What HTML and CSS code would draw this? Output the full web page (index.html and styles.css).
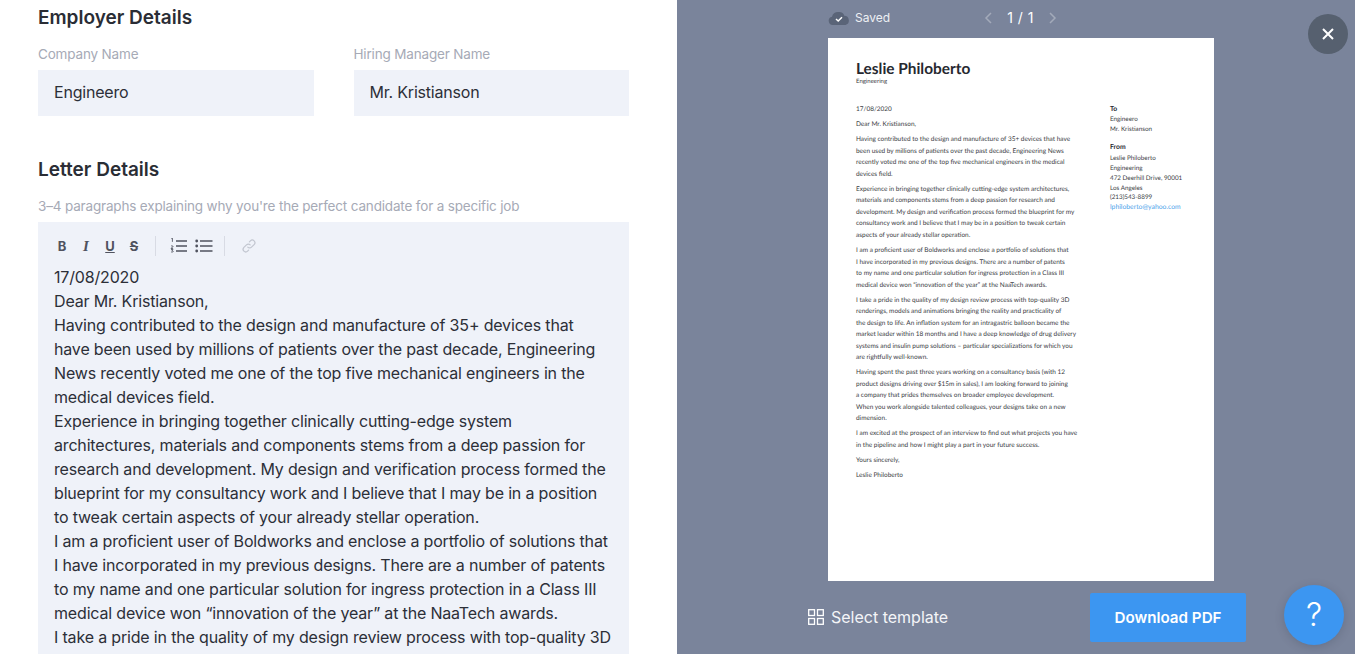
FILE: index.html
```html
<!DOCTYPE html>
<html lang="en">
<head>
<meta charset="utf-8">
<title>Cover letter editor</title>
<link rel="stylesheet" href="styles.css">
</head>
<body>
<main class="editor">
  <h2 class="section-title first">Employer Details</h2>
  <div class="field-row">
    <div class="field">
      <label class="field-label">Company Name</label>
      <div class="field-input">Engineero</div>
    </div>
    <div class="field">
      <label class="field-label">Hiring Manager Name</label>
      <div class="field-input">Mr. Kristianson</div>
    </div>
  </div>
  <h2 class="section-title second">Letter Details</h2>
  <p class="hint">3–4 paragraphs explaining why you're the perfect candidate for a specific job</p>
  <section class="rich">
    <div class="toolbar">
      <span class="tool tool-b">B</span>
      <span class="tool tool-i">I</span>
      <span class="tool tool-u">U</span>
      <span class="tool tool-s">S</span>
      <span class="tool-sep sep-a"></span>
      <svg class="tool-icon" width="18" height="16" viewBox="0 0 18 16"><g fill="none" stroke="#50535f" stroke-width="1.5"><path d="M6 3h11M6 8h11M6 13h11"/></g><g fill="none" stroke="#50535f" stroke-width=".9"><path d="M1.4 1.2l1-.6v4M1 9.300c.3-.8 2-.8 2 .2 0 .8-2 1.300-2 2h2.100M1 12.700h2l-1 1.200c1 0 1.300.4 1.200.9-.2.8-1.700.7-2.200.1" transform="translate(0 -.5) scale(1 .95)"/></g></svg>
      <svg class="tool-icon icon-bullets" width="18" height="16" viewBox="0 0 18 16"><g fill="none" stroke="#50535f" stroke-width="1.500"><path d="M5 3h12.500M5 8h12.500M5 13h12.500"/></g><g fill="#50535f"><circle cx="1.700" cy="3" r="1.400"/><circle cx="1.700" cy="8" r="1.400"/><circle cx="1.700" cy="13" r="1.400"/></g></svg>
      <span class="tool-sep sep-b"></span>
      <svg class="tool-icon icon-link" width="16" height="16" viewBox="0 0 16 16"><g fill="none" stroke="#c2c6d0" stroke-width="1.200" stroke-linecap="round"><path d="M6.800 9.200a2.600 2.600 0 0 0 3.700 0l2.600-2.600a2.600 2.600 0 0 0-3.700-3.700l-1 1"/><path d="M9.200 6.800a2.600 2.600 0 0 0-3.700 0l-2.600 2.600a2.600 2.600 0 0 0 3.700 3.700l1-1"/></g></svg>
    </div>
    <div class="rich-text">
      <p>17/08/2020</p>
      <p>Dear Mr. Kristianson,</p>
      <p>Having contributed to the design and manufacture of 35+ devices that<br>have been used by millions of patients over the past decade, Engineering<br>News recently voted me one of the top five mechanical engineers in the<br>medical devices field.</p>
      <p>Experience in bringing together clinically cutting-edge system<br>architectures, materials and components stems from a deep passion for<br>research and development. My design and verification process formed the<br>blueprint for my consultancy work and I believe that I may be in a position<br>to tweak certain aspects of your already stellar operation.</p>
      <p>I am a proficient user of Boldworks and enclose a portfolio of solutions that<br>I have incorporated in my previous designs. There are a number of patents<br>to my name and one particular solution for ingress protection in a Class III<br>medical device won “innovation of the year” at the NaaTech awards.</p>
      <p>I take a pride in the quality of my design review process with top-quality 3D</p>
    </div>
  </section>
</main>
<aside class="preview">
  <header class="preview-top">
    <div class="saved">
      <svg width="22" height="14" viewBox="0 0 22 14"><path fill="#5a6478" d="M5 14a4.200 4.200 0 0 1-1-8.300A6 6 0 0 1 10.500 1a5 5 0 0 1 5.800 3.800A4.700 4.700 0 0 1 17.500 14z"/><path fill="none" stroke="#fff" stroke-width="1.500" d="M8 8l2.200 2 3.800-3.800"/></svg>
      <span>Saved</span>
    </div>
    <div class="pager">
      <svg class="chev" width="10" height="14" viewBox="0 0 10 14"><path fill="none" stroke="#a3aaba" stroke-width="1.500" d="M8 2L3 7l5 5"/></svg>
      <span class="pager-text">1 / 1</span>
      <svg class="chev" width="10" height="14" viewBox="0 0 10 14"><path fill="none" stroke="#a3aaba" stroke-width="1.500" d="M2 2l5 5-5 5"/></svg>
    </div>
  </header>
  <article class="page">
    <h1 class="doc-name">Leslie Philoberto</h1>
    <div class="doc-role">Engineering</div>
    <div class="doc-cols">
      <div class="doc-body">
        <p>17/08/2020</p>
        <p>Dear Mr. Kristianson,</p>
        <p>Having contributed to the design and manufacture of 35+ devices that have<br>been used by millions of patients over the past decade, Engineering News<br>recently voted me one of the top five mechanical engineers in the medical<br>devices field.</p>
        <p>Experience in bringing together clinically cutting-edge system architectures,<br>materials and components stems from a deep passion for research and<br>development. My design and verification process formed the blueprint for my<br>consultancy work and I believe that I may be in a position to tweak certain<br>aspects of your already stellar operation.</p>
        <p>I am a proficient user of Boldworks and enclose a portfolio of solutions that<br>I have incorporated in my previous designs. There are a number of patents<br>to my name and one particular solution for ingress protection in a Class III<br>medical device won “innovation of the year” at the NaaTech awards.</p>
        <p>I take a pride in the quality of my design review process with top-quality 3D<br>renderings, models and animations bringing the reality and practicality of<br>the design to life. An inflation system for an intragastric balloon became the<br>market leader within 18 months and I have a deep knowledge of drug delivery<br>systems and insulin pump solutions – particular specializations for which you<br>are rightfully well-known.</p>
        <p>Having spent the past three years working on a consultancy basis (with 12<br>product designs driving over $15m in sales), I am looking forward to joining<br>a company that prides themselves on broader employee development.<br>When you work alongside talented colleagues, your designs take on a new<br>dimension.</p>
        <p>I am excited at the prospect of an interview to find out what projects you have<br>in the pipeline and how I might play a part in your future success.</p>
        <p>Yours sincerely,</p>
        <p>Leslie Philoberto</p>
      </div>
      <div class="doc-side">
        <h3>To</h3>
        <div>Engineero</div>
        <div>Mr. Kristianson</div>
        <h3 class="from">From</h3>
        <div>Leslie Philoberto</div>
        <div>Engineering</div>
        <div>472 Deerhill Drive, 90001</div>
        <div>Los Angeles</div>
        <div>(213)543-8899</div>
        <div class="doc-mail">lphiloberto@yahoo.com</div>
      </div>
    </div>
  </article>
  <footer class="preview-bottom">
    <div class="select-template">
      <svg width="16" height="16" viewBox="0 0 16 16"><g fill="none" stroke="#fff" stroke-width="1.300"><rect x=".7" y=".7" width="5.800" height="5.800"/><rect x="9.500" y=".7" width="5.800" height="5.800"/><rect x=".7" y="9.500" width="5.800" height="5.800"/><rect x="9.500" y="9.500" width="5.800" height="5.800"/></g></svg>
      <span>Select template</span>
    </div>
    <button class="download">Download PDF</button>
  </footer>
  <button class="close" aria-label="Close"><svg width="12" height="12" viewBox="0 0 12 12"><path fill="none" stroke="#fff" stroke-width="2" d="M1 1l10 10M11 1L1 11"/></svg></button>
  <button class="help">?</button>
</aside>
</body>
</html>
```
FILE: styles.css
```css
* { box-sizing: border-box; }
html, body { margin: 0; height: 654px; overflow: hidden; }
body { display: flex; font-family: Inter, "Liberation Sans", sans-serif; color: #2c2f38; background: #fff; }
p, h1, h2, h3 { margin: 0; }

.editor { width: 677px; flex: none; padding: 0 48px 0 38px; overflow: hidden; }
.section-title { font-size: 19px; line-height: 24px; font-weight: 600; color: #2a2d35; }
.section-title.first { margin-top: 6px; }
.section-title.second { margin-top: 42px; }
.field-row { display: flex; gap: 40px; margin-top: 14px; }
.field { flex: 1; }
.field-label { display: block; font-size: 13.500px; letter-spacing: -.17px; line-height: 20px; color: #a6aab6; margin-bottom: 6px; }
.field-input { height: 46px; background: #eff2f9; padding: 0 16px; font-size: 16px; letter-spacing: -.2px; line-height: 45px; color: #2c2f38; }
.hint { font-size: 13.500px; letter-spacing: -.17px; line-height: 20px; color: #a6aab6; margin-top: 14px; }
.rich { margin-top: 6px; background: #eff2f9; padding: 12px 16px 0; height: 440px; overflow: hidden; }
.toolbar { display: flex; align-items: center; height: 24px; color: #50535f; }
.tool { width: 12px; margin-right: 12px; text-align: center; font-size: 13px; line-height: 24px; font-weight: 700; }
.tool-b { margin-left: 2px; }
.tool-i { font-style: italic; font-size: 15px; font-family: "Liberation Serif", serif; }
.tool-u { text-decoration: underline; }
.tool-s { text-decoration: line-through; margin-right: 0; }
.tool-sep { width: 1px; height: 20px; background: #d8dbe4; }
.sep-a { margin: 0 14px 0 15px; }
.sep-b { margin: 0 16px 0 11px; }
.icon-bullets { margin-left: 7px; }
.rich-text { margin-top: 7px; font-size: 16px; letter-spacing: -.17px; line-height: 24px; white-space: nowrap; color: #2c2f38; }

.preview { position: relative; flex: 1; padding-left: 10px; background: #7a849b; color: #fff; display: flex; flex-direction: column; align-items: center; }
.preview-top { width: 386px; height: 38px; padding-bottom: 3px; display: flex; align-items: center; position: relative; }
.saved { display: flex; align-items: center; gap: 5px; font-size: 12px; color: #eef0f4; }
.pager { display: flex; align-items: center; margin-left: 93px; gap: 14px; font-size: 14px; letter-spacing: .5px; }
.page { width: 386px; height: 543px; flex: none; background: #fff; color: #3a3c44; padding: 22px 28px 0; font-family: Lato, "Noto Sans", sans-serif; text-rendering: geometricPrecision; }
.doc-name { font-size: 15.400px; line-height: 19px; font-weight: 700; color: #26282f; }
.doc-role { font-size: 6px; line-height: 6px; color: #3a3c44; }
.doc-cols { display: flex; margin-top: 19px; }
.doc-body { width: 254px; flex: none; font-size: 6.470px; line-height: 11.500px; white-space: nowrap; }
.doc-body p { margin-bottom: 3.650px; }
.doc-side { font-size: 6.300px; line-height: 9.700px; white-space: nowrap; }
.doc-side h3 { font-size: 6.800px; line-height: 11px; font-weight: 700; color: #26282f; }
.doc-side .from { margin: 8px 0 1px; }
.doc-mail { color: #4ea3ea; font-size: 6.800px; }

.preview-bottom { width: 438px; height: 73px; flex: none; display: flex; align-items: flex-start; justify-content: space-between; padding-top: 12px; margin-left: 12px; }
.select-template { display: flex; align-items: center; gap: 7px; height: 48px; font-size: 16px; color: #f4f5f8; }
.download { width: 156px; height: 49px; border: 0; border-radius: 2px; background: #3c96f1; color: #fff; font: 600 15.200px Inter, sans-serif; }
.close { position: absolute; top: 14px; right: 7px; width: 40px; height: 40px; border: 0; border-radius: 50%; background: #56606f; display: flex; align-items: center; justify-content: center; padding: 0; }
.help { position: absolute; top: 585px; right: 11px; width: 60px; height: 60px; border: 0; border-radius: 50%; background: #3c96f1; color: #fff; font: 300 32px/58px Inter, sans-serif; padding: 0; box-shadow: 0 2px 8px rgba(50,60,80,.25); }
```
